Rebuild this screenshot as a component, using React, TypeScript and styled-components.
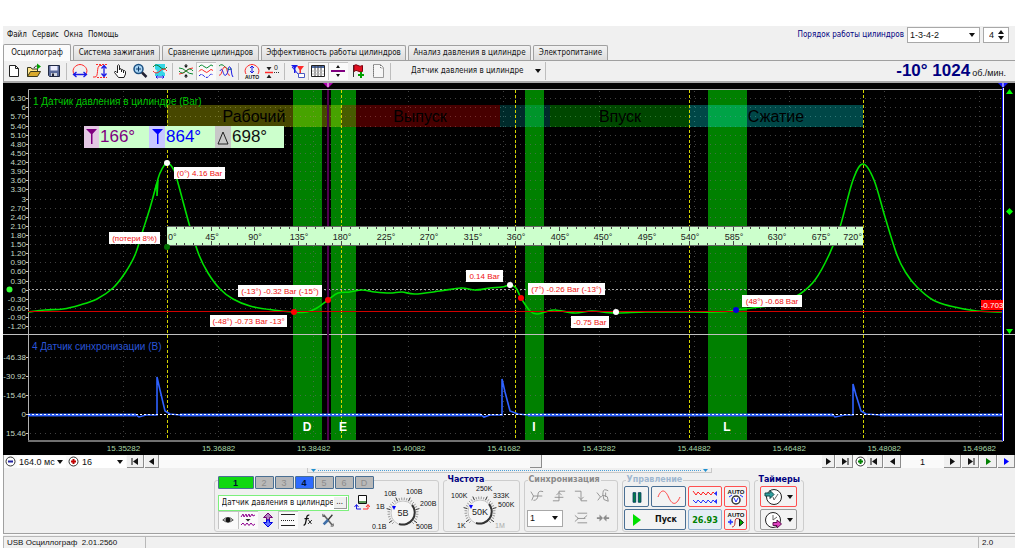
import React from "react";
import styled, { createGlobalStyle, css } from "styled-components";

const UI = `"DejaVu Sans Condensed", "Noto Sans", sans-serif`;
const SANS = `"Liberation Sans", Arial, sans-serif`;

const Global = createGlobalStyle`
  * { box-sizing: border-box; }
  body { margin: 0; background: #fff; font: 8px/12px ${UI}; color: #111; }
  button, select, input { font: inherit; color: inherit; margin: 0; padding: 0; border: 0; background: none; }
  svg { display: block; flex: none; }
`;

const Page = styled.div`
  padding: 26px 9px 3px 3px;
`;
const Window = styled.main`
  background: #f0f0f0;
`;
const Header = styled.header`
  display: flex;
  justify-content: space-between;
  height: 18px;
`;
const Menu = styled.nav`
  display: flex;
  align-items: center;
  gap: 3px;
  padding-left: 3px;
`;
const MenuItem = styled.button`
  padding: 0 1px;
`;
const Order = styled.div`
  display: flex;
  align-items: center;
  gap: 3px;
  padding-right: 6px;
  color: #000080;
`;
const Field = styled.span<{ $w: number; $h?: number }>`
  position: relative;
  display: flex;
  align-items: center;
  width: ${(p) => p.$w}px;
  height: ${(p) => p.$h ?? 16}px;
  background: #fff;
  border: 1px solid #a8a8a8;
  font-family: ${SANS};
  color: #111;
  & > svg { position: absolute; right: 4px; pointer-events: none; }
`;
const PlainSelect = styled.select`
  appearance: none;
  width: 100%;
  height: 100%;
  padding-left: 2px;
  font-size: 9px;
`;
const PlainInput = styled.input`
  width: 100%;
  min-width: 0;
  padding-left: 5px;
  font-size: 9px;
`;
const Tabs = styled.div`
  display: flex;
  align-items: flex-end;
  gap: 2px;
  height: 17px;
  border-bottom: 1px solid #a0a0a0;
`;
const Tab = styled.button<{ $w: number; $active?: boolean }>`
  width: ${(p) => p.$w}px;
  height: 15px;
  background: linear-gradient(#f2f2f2, #dcdcdc);
  border: 1px solid #a0a0a0;
  border-bottom: 0;
  border-radius: 2px 2px 0 0;
  white-space: nowrap;
  ${(p) =>
    p.$active &&
    css`
      height: 17px;
      margin-bottom: -1px;
      background: #fbfbfb;
    `}
`;
const Toolbar = styled.div`
  display: flex;
  align-items: center;
  height: 22px;
  border-left: 1px solid #a0a0a0;
  border-bottom: 2px solid #a8a8a8;
`;
const Tool = styled.button<{ $on?: boolean }>`
  display: grid;
  place-items: center;
  width: 20px;
  height: 18px;
  ${(p) => p.$on && css`background: #fafafa; box-shadow: inset 1px 1px #c4c4c4;`}
`;
const Rule = styled.span`
  width: 1px;
  height: 17px;
  margin: 0 3px 0 2px;
  background: #bdbdbd;
`;
const SensorPick = styled.button`
  display: flex;
  align-items: center;
  justify-content: space-between;
  width: 152px;
  height: 18px;
  padding: 0 4px 0 17px;
  border-right: 1px solid #bdbdbd;
`;
const Readout = styled.output`
  margin-left: auto;
  padding-right: 9px;
  font: bold 17px/18px ${SANS};
  color: #000080;
  white-space: nowrap;
`;
const Unit = styled.small`
  padding-left: 2px;
  font: 9px/12px ${SANS};
  color: #111;
`;
const Chart = styled.svg`
  width: 100%;
  height: auto;
  background: #000;
  font-family: ${SANS};
`;
const Navigator = styled.div`
  display: flex;
  align-items: center;
  gap: 1px;
  height: 13px;
  background: #fafafa;
  border-left: 1px solid #a0a0a0;
`;
const NavField = styled.span<{ $w: number }>`
  position: relative;
  display: flex;
  align-items: center;
  width: ${(p) => p.$w}px;
  height: 12px;
  background: #fff;
  font-family: ${SANS};
  & > svg { position: absolute; right: 3px; pointer-events: none; }
`;
const NavButton = styled.button<{ $w: number }>`
  display: grid;
  place-items: center;
  width: ${(p) => p.$w}px;
  height: 13px;
  background: #f0f0f0;
  border-right: 1px solid #8c8c8c;
  border-bottom: 1px solid #8c8c8c;
`;
const RoundButton = styled.button`
  display: grid;
  place-items: center;
  width: 12px;
  height: 13px;
`;
const Track = styled.div`
  display: flex;
  flex: 1;
  justify-content: center;
  height: 13px;
  padding-left: 90px;
`;
const Thumb = styled.span`
  width: 12px;
  background: #f0f0f0;
  border-right: 1px solid #8c8c8c;
  border-bottom: 1px solid #8c8c8c;
`;
const PageNumber = styled.span`
  width: 41px;
  text-align: center;
  font: 9px/12px ${SANS};
`;
const Deck = styled.section`
  height: 66px;
  border-left: 1px solid #a0a0a0;
  border-bottom: 1px solid #a0a0a0;
`;
const Splitter = styled.div`
  display: flex;
  align-items: center;
  justify-content: space-between;
  width: 40%;
  height: 5px;
  margin: 0 auto 3px;
  border: 1px solid #c8c8c8;
  border-top: 0;
  padding: 0 3px;
`;
const Dots = styled.span`
  flex: 1;
  margin: 0 2px;
  border-top: 1px dotted #4aa0d8;
`;
const Panels = styled.div`
  display: flex;
  justify-content: center;
  gap: 4px;
  height: 56px;
  padding-right: 2px;
`;
const Group = styled.fieldset<{ $w: number; $tone?: string }>`
  width: ${(p) => p.$w}px;
  min-width: 0;
  margin: 0;
  padding: 0;
  border: 1px solid #cdcdcd;
  border-radius: 3px;
  & > legend {
    height: 8px;
    margin-left: 3px;
    padding: 0 1px;
    font: bold 8px/8px "DejaVu Sans", sans-serif;
    color: ${(p) => p.$tone ?? "#000080"};
    white-space: nowrap;
  }
`;
const ChannelGroup = styled(Group)`
  display: flex;
  margin-top: 4px;
  height: 52px;
`;
const ChannelSide = styled.div`
  flex: none;
  width: 157px;
  padding-left: 3px;
`;
const ChannelRow = styled.div`
  display: flex;
  gap: 1px;
  width: 156px;
  margin-top: -5px;
  background: #f0f0f0;
`;
const Channel = styled.button<{ $w?: number; $bg?: string }>`
  flex: none;
  width: ${(p) => p.$w ?? 19}px;
  height: 13px;
  background: ${(p) => p.$bg ?? "#b9b9b9"};
  border: 1px solid #4a6f93;
  border-radius: 1px;
  font: ${(p) => (p.$bg ? "bold" : "normal")} 9px/10px ${SANS};
  color: ${(p) => (p.$bg ? "#001030" : "#8c8c8c")};
`;
const SensorRow = styled.div`
  display: flex;
  align-items: center;
  gap: 3px;
  height: 17px;
  margin-top: 5px;
`;
const SensorField = styled.span`
  display: flex;
  width: 132px;
  height: 16px;
  background: #fff;
  border: 1px solid #7df07d;
`;
const SensorInput = styled.input`
  flex: 1;
  min-width: 0;
  padding-left: 3px;
`;
const More = styled.button`
  width: 13px;
  height: 12px;
  margin: 1px;
  background: #f0f0f0;
  border-right: 1px solid #999;
  border-bottom: 1px solid #999;
  line-height: 8px;
`;
const ModeRow = styled.div`
  display: flex;
`;
const KnobBox = styled.div`
  position: relative;
`;
const KnobRange = styled.input`
  position: absolute;
  inset: 12px 16px;
  width: 36px;
  height: 28px;
  opacity: 0;
`;
const SyncGrid = styled.div`
  display: grid;
  grid-template-columns: repeat(4, 21px);
  grid-auto-rows: 20px;
  align-items: center;
  justify-content: center;
  gap: 2px 1px;
  padding-top: 2px;
`;
const SyncSelect = styled.span`
  grid-column: span 2;
  color: #666;
`;
const ControlGrid = styled.div`
  display: grid;
  grid-template-columns: 25px 35px 34px 23px;
  grid-auto-rows: 21px;
  justify-content: center;
  gap: 2px;
  padding-top: 2px;
`;
const PanelButton = styled.button<{ $edge?: string; $span?: number; $tint?: string }>`
  display: flex;
  align-items: center;
  justify-content: center;
  gap: 14px;
  grid-column: span ${(p) => p.$span ?? 1};
  background: ${(p) => p.$tint ?? "#f3f3f3"};
  border: 1px solid ${(p) => p.$edge ?? "#4a6f93"};
  border-radius: 2px;
  font: bold 8px/12px "DejaVu Sans", sans-serif;
`;
const Speed = styled.output`
  display: grid;
  place-items: center;
  background: #e4edf5;
  border: 1px solid #8fb0d0;
  border-radius: 2px;
  font: bold 9px/12px "DejaVu Sans Condensed", sans-serif;
  color: #008000;
`;
const TimerStack = styled.div`
  display: grid;
  grid-auto-rows: 21px;
  gap: 2px;
  padding: 2px 6px 0 5px;
`;
const TimerButton = styled(PanelButton)`
  gap: 4px;
`;
const Status = styled.footer`
  display: flex;
  align-items: center;
  height: 14px;
  border-top: 1px solid #fafafa;
  font-family: ${SANS};
`;
const StatusCell = styled.span<{ $w?: number }>`
  flex: ${(p) => (p.$w ? "none" : 1)};
  width: ${(p) => (p.$w ? p.$w + "px" : "auto")};
  height: 12px;
  padding-left: 3px;
  border-left: 1px solid #b8b8b8;
  border-top: 1px solid #b8b8b8;
`;

/* ---------- icons ---------- */
const Ico = ({ children, s = 16 }: { children: React.ReactNode; s?: number }) => (
  <svg width={s} height={s} viewBox="0 0 16 16" fill="none" strokeWidth="1" aria-hidden="true">
    {children}
  </svg>
);
const Caret = () => (
  <svg width="6" height="4" viewBox="0 0 6 4" aria-hidden="true">
    <path d="M0 0H6L3 4Z" fill="#111" />
  </svg>
);
const RED = "#ff2a2a";
const BLUE = "#1a1ae6";
const MUTED = "#8c8c8c";

const icons: Record<string, React.ReactNode> = {
  new: <path d="M3.5 2.5H9.500L12.500 5.500V13.500H3.500ZM9.500 2.500V5.500H12.500" fill="#fff" stroke="#222" />,
  open: (
    <>
      <path d="M1.500 13.500V4.500H5L6 6H11.500V8" fill="#ffe58a" stroke="#3a3a20" />
      <path d="M1.500 13.500L4.500 8.500H14.500L11.500 13.500Z" fill="#d9a92c" stroke="#3a3a20" />
      <path d="M8 5C9 3 10 3 12 3" stroke="#222" />
      <path d="M11 0.500L15 3.500L11 6.500Z" fill="#00a000" />
    </>
  ),
  save: (
    <>
      <path d="M2.500 2.500H13.500V13.500H3.500L2.500 12.500Z" fill="#5a6a9a" stroke="#222a44" />
      <path d="M4.500 3H11.500V7.500H4.500Z" fill="#eef" />
      <path d="M5 10H11V13H5Z" fill="#cfd4dd" />
      <path d="M6 10.500H8V13H6Z" fill="#223" />
    </>
  ),
  width: (
    <>
      <path d="M2 11C-1 6 4 1.500 8 1.500S17 6 14 11" stroke={RED} />
      <path d="M2 11.500H14M4.500 9L1.500 11.500L4.500 14M11.500 9L14.500 11.500L11.500 14" stroke={BLUE} strokeWidth="1.300" />
    </>
  ),
  height: (
    <>
      <path d="M1 14H3C7 14 4 3 8 2.500H10" stroke={RED} />
      <path d="M4 1.500H15M5 14.500H15" stroke={RED} strokeDasharray="2 1" />
      <path d="M12 3V13M9.500 5.500L12 2.500L14.500 5.500M9.500 10.500L12 13.500L14.500 10.500" stroke={BLUE} strokeWidth="1.300" />
    </>
  ),
  hand: <path d="M5.500 10V2.500Q6.500 1 7.500 2.500V7L8 6Q9 5 9.500 6.500V7Q10.500 6 11.300 7V8Q13 7 13.500 8.500V11L12 14.500H6.500L2.500 9.500Q2.500 8 4 8.500L5.500 10M9.500 7V9M11.500 8V10" fill="#fff" stroke="#222" />,
  zoom: (
    <>
      <circle cx="6.500" cy="6" r="4.500" fill="#a8d4f4" stroke="#1c4f80" strokeWidth="1.500" />
      <path d="M4 6H9M6.500 3.500V8.500" stroke="#0b3a6b" />
      <path d="M10 9.500L14.500 14" stroke="#223" strokeWidth="2.500" />
    </>
  ),
  zones: (
    <>
      <path d="M3 1H13V6L10.500 8L13 10V13H3V10L5.500 8L3 6Z" fill="#33d6e6" />
      <path d="M1 4Q4 0 8 4T15 4" stroke="#0a7a30" />
      <path d="M1 8Q4 12 8 8T15 8" stroke={RED} />
      <path d="M4 14H12M5.500 12.500L4 14L5.500 15.500M10.500 12.500L12 14L10.500 15.500" stroke={BLUE} />
    </>
  ),
  squeeze: (
    <>
      <path d="M8 1V3M8 15V13" stroke="#111" />
      <path d="M6 2.500H10L8 5ZM6 13.500H10L8 11Z" fill="#111" />
      <path d="M1 5Q5 5 8 8T15 11" stroke="#0a8a30" />
      <path d="M1 11Q5 11 8 8T15 5" stroke={RED} />
      <path d="M1 8Q4 12 8 8T15 8" stroke="#0a8a30" />
    </>
  ),
  waves: (
    <>
      <path d="M1 4Q3 .500 6 3.500T11 3.500T15 3" stroke="#0a8a30" />
      <path d="M1 8.500Q3 5 6 8T11 8T15 7.500" stroke={RED} />
      <path d="M1 13Q3 10 6 13T11 13T15 12" stroke={BLUE} strokeDasharray="3 1" />
    </>
  ),
  overlay: (
    <>
      <path d="M1 3Q4 0 7 4T14 6" stroke="#0a8a30" />
      <path d="M1 12C4 14 4 3 7 4S9 14 12 12" stroke={RED} />
      <path d="M2 8C5 2 5 15 8 12S10 2 12 4S13 12 15 14" stroke={BLUE} />
    </>
  ),
  autoscale: (
    <>
      <path d="M2 11C-1 6 4 1.500 8 1.500S17 6 14 11" stroke={RED} />
      <path d="M8 3V10M6 5L8 3L10 5M6 8L8 10L10 8" stroke={BLUE} />
      <text x="8" y="15.500" fontSize="5" fontWeight="bold" textAnchor="middle" fill="#111" fontFamily={SANS}>AUTO</text>
    </>
  ),
  zero: (
    <>
      <path d="M1 9.500H9" stroke={RED} strokeWidth="1.500" />
      <path d="M2.500 4H7.500L5 7.500ZM2.500 15H7.500L5 11.500Z" fill="#222" />
      <path d="M10 9.500H15" stroke="#333" strokeDasharray="1 1" />
      <text x="12" y="7" fontSize="7" textAnchor="middle" fill="#222" fontFamily={SANS}>0</text>
    </>
  ),
  markers: (
    <>
      <path d="M1 2H8L5.500 5V10H4V5Z" fill={BLUE} />
      <path d="M7 3H14L11 7V11H9.500V7Z" fill={RED} />
      <path d="M2 4L9 12" stroke={BLUE} />
      <path d="M8.500 10.500H14.500V14.500H8.500Z" fill="#fff" stroke="#4a5ac0" />
    </>
  ),
  table: (
    <>
      <path d="M1.500 2.500H14.500V13.500H1.500Z" fill="#fff" stroke="#222" />
      <path d="M2 3H14V5H2Z" fill="#4a6aa8" />
      <path d="M5 3V13M8 3V13M11 3V13" stroke="#444" />
      <path d="M2 8H14M2 11H14" stroke="#bbb" />
    </>
  ),
  divide: (
    <>
      <path d="M1 8H15" stroke="#800080" strokeWidth="2" />
      <path d="M6 5H10L8 2ZM6 11H10L8 14Z" fill="#111" />
    </>
  ),
  flag: (
    <>
      <path d="M3.500 2V14" stroke="#333" />
      <path d="M4 2.500Q6 1 8 2.500T12.500 2.500V8.500Q10 9.500 8 8T4 8.500Z" fill="#e01020" stroke="#800010" />
      <path d="M11 9V15M8 12H14" stroke="#00a000" strokeWidth="2" />
    </>
  ),
  sheet: (
    <>
      <path d="M3.500 1.500H10.500L13.500 4.500V14.500H3.500Z" fill="#f6f6f6" stroke="#9a9a9a" />
      <path d="M3.500 2V14M10.500 2V5H13" stroke="#777" strokeDasharray="1 1" />
    </>
  ),
  eye: (
    <>
      <path d="M2 8Q8 2 14 8Q8 13 2 8Z" fill="#bbb" stroke="#444" />
      <circle cx="8" cy="8" r="2.800" fill="#111" />
    </>
  ),
  noise: (
    <>
      <path d="M1 5L3 2L4 5L6 2L7 5L9 2L10 5L12 2L13 4L15 3" stroke="#900090" />
      <path d="M5.500 7H10.500L8 9.500Z" fill="#222" />
      <path d="M1 13L3 11L5 13.500L7 11L9 13.500L11 11L13 13.500L15 12" stroke="#900090" />
    </>
  ),
  updown: (
    <>
      <path d="M8 1L12.500 5.500H9.500V8H6.500V5.500H3.500Z" fill="#b080c0" stroke="#700070" />
      <path d="M8 15L12.500 10.500H9.500V8H6.500V10.500H3.500Z" fill="#6070ff" stroke="#0000e0" />
    </>
  ),
  lines: (
    <>
      <path d="M1 2.500H15M1 13.500H15" stroke="#222" />
      <path d="M1 8.500H15" stroke="#222" strokeDasharray="1 1" />
    </>
  ),
  fx: (
    <>
      <path d="M3 14Q5 14 5.500 10L6.500 5Q7 2 9.500 2.500M4 6.500H9" stroke="#111" strokeWidth="1.500" />
      <path d="M8.500 8L12 12.500M12.500 8L8 12.500" stroke="#111" />
    </>
  ),
  tools: (
    <>
      <path d="M3 2L13 14" stroke="#666" strokeWidth="2" />
      <path d="M13 2L8 8" stroke="#333" strokeWidth="1.500" />
      <path d="M8 8L3 13" stroke="#3f6fa8" strokeWidth="3" />
      <path d="M2 1V4H5M11 15H14V12" stroke="#555" />
    </>
  ),
  rotate: (
    <>
      <path d="M4.500 .500H12.500V8.500H4.500Z" fill="#fff" stroke="#111" />
      <path d="M5 6H12V8H5Z" fill="#5a9a5a" />
      <path d="M7 14H2.500V10M0.500 12L2.500 9.500L4.500 12" stroke={BLUE} />
      <path d="M9 14H14V10M12 12L14 9.500L16 12" stroke={RED} />
    </>
  ),
  trigSlope: <path d="M1 3L4 8L2 13M4 13Q9 13 9 7T15 3M4 8H14" stroke={MUTED} />,
  trigRise: <path d="M1 13.500H8V2.500H15M5 7L8 4L11 7M3 9.500H13" stroke={MUTED} />,
  trigFall: <path d="M1 2.500H8V13.500H15M5 9L8 12L11 9" stroke={MUTED} />,
  trigTouch: <path d="M1 4L5 9L2 13M5 9Q8 9 8 4T14 2M8 7L13 9L14 14L9 12ZM11 4V9" fill="none" stroke={MUTED} />,
  levels: <path d="M4 2.500H15M4 8.500H13M4 13.500H15M1 5L5 8.500L1 12M15 5L11 8.500" stroke={MUTED} />,
  meet: (
    <>
      <path d="M1 8H5M11 8H15" stroke={MUTED} strokeWidth="2" />
      <path d="M4 4L8 8L4 12ZM12 4L8 8L12 12Z" fill={MUTED} />
    </>
  ),
};

const toolGroups: { id: string; label: string; on?: boolean }[][] = [
  [{ id: "new", label: "Новый" }, { id: "open", label: "Открыть" }, { id: "save", label: "Сохранить" }],
  [
    { id: "width", label: "Ширина" },
    { id: "height", label: "Высота" },
    { id: "hand", label: "Рука" },
    { id: "zoom", label: "Лупа" },
    { id: "zones", label: "Зоны" },
  ],
  [{ id: "squeeze", label: "Сжать" }, { id: "waves", label: "Каналы", on: true }, { id: "overlay", label: "Наложение" }],
  [{ id: "autoscale", label: "Авто" }, { id: "zero", label: "Ноль" }],
  [
    { id: "markers", label: "Маркеры" },
    { id: "table", label: "Таблица", on: true },
    { id: "divide", label: "Линейка", on: true },
    { id: "flag", label: "Метка" },
    { id: "sheet", label: "Отчёт" },
  ],
];

const tabs: [string, number][] = [
  ["Осциллограф", 68],
  ["Система зажигания", 87],
  ["Сравнение цилиндров", 97],
  ["Эффективность работы цилиндров", 145],
  ["Анализ давления в цилиндре", 123],
  ["Электропитание", 75],
];

/* ---------- chart ---------- */
type Pt = [number, number];

const spline = (p: Pt[]) => {
  let d = `M${p[0][0]} ${p[0][1]}`;
  for (let i = 0; i < p.length - 1; i++) {
    const a = p[i - 1] ?? p[i];
    const b = p[i];
    const c = p[i + 1];
    const e = p[i + 2] ?? c;
    d += `C${b[0] + (c[0] - a[0]) / 6} ${b[1] + (c[1] - a[1]) / 6} ${c[0] - (e[0] - b[0]) / 6} ${c[1] - (e[1] - b[1]) / 6} ${c[0]} ${c[1]}`;
  }
  return d;
};

const pressure: Pt[] = [
  [28, 312], [45, 310], [63, 309], [80, 305], [97, 299], [113, 288], [125, 273], [135, 255], [143, 230], [150, 208],
  [155, 190], [160, 173], [167, 163], [174, 170], [178, 183], [190, 227], [199, 255], [208, 273], [220, 289], [233, 299],
  [250, 306], [273, 310], [294, 312], [307, 312], [317, 308], [328, 300], [338, 293], [350, 292], [362, 290], [375, 292],
  [390, 293], [402, 292], [415, 294], [440, 291], [461, 288], [475, 290], [490, 288], [502, 287], [510, 285], [516, 288],
  [521, 298], [530, 311], [537, 314], [545, 312], [555, 310], [575, 313], [592, 311], [615, 313], [645, 312], [680, 312],
  [720, 312], [736, 310], [767, 306], [785, 301], [800, 294], [815, 280], [829, 255], [840, 227], [853, 180], [863, 164],
  [874, 180], [885, 217], [897, 255], [906, 273], [917, 287], [933, 300], [950, 306], [977, 311], [1002, 312],
];
const syncLine =
  "M28 415H136L139 417L146 415H157V377L160 390L165 411L170 414L180 415H481L484 417L490 415H502V379L505 392L510 411L518 414L528 415H833L835 417L845 415H853V384L856 395L861 411L866 414L880 415H1002";

/* Whole numbers are written without decimals; the step is 0.3 Bar. */
const yTicks = Array.from({ length: 26 }, (_, i) => {
  const tenths = 63 - i * 3;
  return { y: 98.2 + i * 9.12, text: tenths % 10 === 0 ? String(tenths / 10) : (tenths / 10).toFixed(2) };
});
const syncTicks = [["-46.38", 357], ["-30.92", 376], ["-15.46", 395], ["0", 414], ["15.46", 433]] as [string, number][];
const xTicks = Array.from({ length: 10 }, (_, i) => ({ x: 123.5 + i * 95.1, text: (15.35282 + i * 0.016).toFixed(5) }));
const deg = (d: number) => 167 + (d * 696.5) / 720;

const bands = [[293, 29, "D", 307], [331, 25, "E", 343], [525, 19, "I", 534], [708, 39, "L", 727]] as [number, number, string, number][];
const strokes = [
  [167, 174, "#ff0", 0.28, "Рабочий", 254],
  [341, 159, "#f00", 0.28, "Выпуск", 420],
  [500, 50, "#0ff", 0.17, "", 0],
  [550, 139, "#0f0", 0.28, "Впуск", 620],
  [689, 174, "#0ff", 0.28, "Сжатие", 776],
] as [number, number, string, number, string, number][];
const notes = [
  [174, 167, 51, "(0°) 4.16 Bar"],
  [109, 232, 51, "(потери 8%)"],
  [238, 285, 84, "(-13°) -0.32 Bar (-15°)"],
  [210, 315, 77, "(-48°) -0.73 Bar -13°"],
  [466, 270, 37, "0.14 Bar"],
  [528, 283, 77, "(7°) -0.26 Bar (-13°)"],
  [571, 316, 38, "-0.75 Bar"],
  [742, 295, 60, "(48°) -0.68 Bar"],
] as [number, number, number, string][];
const dots = [
  [167, 163, "#fff"], [167, 247, "#007000"], [294, 312, "#f00"], [328, 300, "#f00"], [510, 285, "#fff"],
  [521, 298, "#f00"], [616, 312, "#fff"], [736, 310, "#00d"],
] as [number, number, string][];

const Scope = () => (
  <Chart viewBox="3 83 1012 372" role="img" aria-label="Осциллограмма">
    {bands.map(([x, w]) => (
      <rect key={x} x={x} y="90" width={w} height="350" fill="#008000" />
    ))}
    <g stroke="#6a6a6a" strokeOpacity="0.6" strokeDasharray="1 4">
      {yTicks.map((t) => <path key={t.y} d={`M30 ${Math.round(t.y)}.5H1002`} />)}
      {syncTicks.map(([, y]) => <path key={y} d={`M30 ${y}.5H1002`} />)}
      {xTicks.map((t) => <path key={t.x} d={`M${Math.floor(t.x)}.5 91V440`} />)}
    </g>
    <path d="M28 289.500H1002" stroke="#aaa" strokeWidth="1" strokeDasharray="2 2" />
    <g fontSize="8" fill="#c4d8c4" textAnchor="end">
      {yTicks.map((t) => <text key={t.y} x="26" y={Math.round(t.y) + 3}>{t.text}</text>)}
      {syncTicks.map(([s, y]) => <text key={y} x="26" y={y + 3}>{s}</text>)}
    </g>
    <g stroke="#c8c8c8">
      {yTicks.map((t) => <path key={t.y} d={`M26 ${Math.round(t.y)}.5H29`} />)}
      {syncTicks.map(([, y]) => <path key={y} d={`M26 ${y}.5H29`} />)}
    </g>
    <g fontSize="8" fill="#a8d8a8" textAnchor="middle">
      {xTicks.map((t) => <text key={t.x} x={t.x} y="451">{t.text}</text>)}
    </g>
    <path d="M28.500 441V89.500H1003" fill="none" stroke="#b0b0b0" />
    <path d="M3 334.500H1015" stroke="#c0c0c0" />
    <path d="M28 441H1003" stroke="#707070" strokeWidth="2" />
    {strokes.map(([x, w, c, o, s, tx]) => (
      <g key={x}>
        <rect x={x} y="105" width={w} height="22" fill={c} fillOpacity={o} />
        {s && <text x={tx} y="122" fontSize="16" textAnchor="middle" fill="#000">{s}</text>}
      </g>
    ))}
    <g stroke="#d4d400" strokeDasharray="3 2">
      {[167, 341, 515, 689, 863].map((x) => <path key={x} d={`M${x}.5 90V440`} />)}
    </g>
    <path d="M328 90V440" stroke="#500050" strokeWidth="2" />
    <path d="M323 83H333L328 88Z" fill="#b000b0" />
    <path d="M328 83V87" stroke="#fff" />
    <text x="33" y="105" fontSize="10" fill="#00c800">1 Датчик давления в цилиндре (Bar)</text>
    <text x="32" y="350" fontSize="10" fill="#2a55d8">4 Датчик синхронизации (В)</text>
    <path d={spline(pressure)} fill="none" stroke="#00e000" strokeWidth="1.600" />
    <path d="M155 190L157 183V196L158 180" fill="none" stroke="#00e000" strokeWidth="1.600" />
    <path d="M28 311.500H1002" stroke="#d00000" />
    <path d="M28 415H136M180 415H481M528 415H833M880 415H1002" stroke="#2a5cf0" strokeWidth="3" />
    <path d={syncLine} fill="none" stroke="#2f62ff" strokeWidth="1.600" />
    <path d="M28 414.500H1002" stroke="#fff" strokeWidth="1" strokeDasharray="2 2" />
    {bands.map(([x, , s, tx]) => (
      <text key={x} x={tx} y="431" fontSize="12" fontWeight="bold" textAnchor="middle" fill="#fff">{s}</text>
    ))}
    <path d="M1003.500 88V441" stroke="#fff" />
    <path d="M1002.500 88V441" stroke="#1010ff" />
    <path d="M998 83H1008L1003 88Z" fill="#1515ff" />
    <path d="M1003 83V87" stroke="#fff" />
    <path d="M1006 94H1013L1009.500 89ZM1006 329H1013L1009.500 334ZM1009.500 208L1013 211.500L1009.500 215L1006 211.500Z" fill="#0f0" />
    <circle cx="9.500" cy="289.500" r="3" fill="#3f3" />

    <rect x="84" y="126" width="200" height="22" fill="#cfc" />
    <rect x="84" y="126" width="15" height="22" fill="#e4c8e4" />
    <rect x="149" y="126" width="16" height="22" fill="#c8c8ff" />
    <rect x="215" y="126" width="16" height="22" fill="#c8c8c8" />
    <path d="M86 129H97L92.500 134V144H91V134Z" fill="#800080" />
    <path d="M152 129H163L158.500 134V144H157V134Z" fill="#00f" />
    <path d="M223 132L228 144H218Z" fill="none" stroke="#222" />
    <g fontSize="17">
      <text x="100" y="142" fill="#800080">166°</text>
      <text x="166" y="142" fill="#00f">864°</text>
      <text x="232" y="142" fill="#111">698°</text>
    </g>

    <rect x="167" y="227" width="696" height="18" fill="#cfc" />
    <path d="M167 226.500H863M167 245.500H863" stroke="#666" />
    <g stroke="#444">
      {Array.from({ length: 79 }, (_, i) => (i + 1) * 9).map((d) => {
        const h = d % 45 === 0 ? 4 : 2;
        const x = Math.round(deg(d)) + 0.5;
        return <path key={d} d={`M${x} 227V${227 + h}M${x} 245V${245 - h}`} />;
      })}
    </g>
    <g fontSize="9" fill="#222">
      {Array.from({ length: 17 }, (_, i) => i * 45).map((d) => (
        <text
          key={d}
          x={d === 0 ? 168 : d === 720 ? 862 : Math.round(deg(d)) + 1}
          y="240"
          textAnchor={d === 0 ? "start" : d === 720 ? "end" : "middle"}
        >
          {d}°
        </text>
      ))}
    </g>

    {dots.map(([x, y, c]) => <circle key={`${x}-${y}`} cx={x} cy={y} r="3" fill={c} />)}
    {notes.map(([x, y, w, s]) => (
      <g key={s}>
        <rect x={x} y={y} width={w} height="12" fill="#fff" />
        <text x={x + w / 2} y={y + 9} fontSize="8" textAnchor="middle" fill="#f01010">{s}</text>
      </g>
    ))}
    <rect x="981" y="300" width="22" height="10" fill="#f00" />
    <text x="992" y="308" fontSize="8" textAnchor="middle" fill="#fff">-0.703</text>
  </Chart>
);

/* ---------- small widgets ---------- */
const Arrow = ({ back, bar, c = "#111" }: { back?: boolean; bar?: boolean; c?: string }) => (
  <svg width="9" height="7" viewBox="0 0 9 7" aria-hidden="true">
    <path d={back ? "M7 0V7L2 3.500Z" : "M2 0V7L7 3.500Z"} fill={c} />
    {bar && <path d={back ? "M1 0V7" : "M8 0V7"} stroke={c} strokeWidth="1" />}
  </svg>
);
const Round = ({ plus, c }: { plus?: boolean; c: string }) => (
  <svg width="11" height="11" viewBox="0 0 11 11" fill="none" aria-hidden="true">
    <circle cx="5.500" cy="5.500" r="4.500" fill="#fff" stroke="#333" />
    <path d={plus ? "M3 5.500H8M5.500 3V8" : "M3 5.500H8"} stroke={c} strokeWidth="2" />
  </svg>
);

type KnobLabel = [string, number, number, string?];
type KnobProps = { label: string; value: string; w: number; h: number; cx: number; cy: number; marks: KnobLabel[] };
const Knob = ({ label, value, w, h, cx, cy, marks }: KnobProps) => (
  <KnobBox>
    <svg width={w} height={h} viewBox={`0 0 ${w} ${h}`} fontFamily={SANS} fontSize="7" aria-hidden="true">
      {Array.from({ length: 28 }, (_, i) => {
        const a = ((135 + i * 10) * Math.PI) / 180;
        const r = i % 5 === 1 ? 17 : 15.5;
        return (
          <path
            key={i}
            d={`M${cx + 13 * Math.cos(a)} ${cy + 13 * Math.sin(a)}L${cx + r * Math.cos(a)} ${cy + r * Math.sin(a)}`}
            stroke={i % 5 === 1 ? "#333" : "#999"}
          />
        );
      })}
      <circle cx={cx} cy={cy} r="12" fill="#f6f6f6" stroke="#c4c4c4" />
      <path d={`M${cx + 9} ${cy - 8}A12 12 0 0 1 ${cx - 4} ${cy + 11}`} fill="none" stroke="#333" strokeWidth="2" />
      <path d={`M${cx - 11} ${cy - 7}H${cx - 7}L${cx - 9} ${cy - 3}Z`} fill="#00f" />
      <text x={cx} y={cy + 3} textAnchor="middle" fontSize="9" fill="#222">{value}</text>
      {marks.map(([s, x, y, c]) => (
        <text key={s} x={x} y={y} fill={c ?? "#111"}>{s}</text>
      ))}
    </svg>
    <KnobRange type="range" aria-label={label} />
  </KnobBox>
);

export default function App() {
  return (
    <Page>
      <Global />
      <Window>
        <Header>
          <Menu>
            {["Файл", "Сервис", "Окна", "Помощь"].map((m) => <MenuItem key={m}>{m}</MenuItem>)}
          </Menu>
          <Order>
            <label htmlFor="order">Порядок работы цилиндров</label>
            <Field $w={73}>
              <PlainSelect id="order"><option>1-3-4-2</option></PlainSelect>
              <Caret />
            </Field>
            <Field $w={26}>
              <PlainInput aria-label="Число цилиндров" defaultValue="4" />
              <svg width="6" height="10" viewBox="0 0 6 10" aria-hidden="true">
                <path d="M0 4H6L3 0ZM0 6H6L3 10Z" fill="#111" />
              </svg>
            </Field>
          </Order>
        </Header>

        <Tabs role="tablist">
          {tabs.map(([t, w], i) => (
            <Tab key={t} role="tab" aria-selected={i === 0} $w={w} $active={i === 0}>{t}</Tab>
          ))}
        </Tabs>

        <Toolbar>
          {toolGroups.map((g, i) => (
            <React.Fragment key={i}>
              {g.map((t) => (
                <Tool key={t.id} aria-label={t.label} $on={t.on}><Ico>{icons[t.id]}</Ico></Tool>
              ))}
              <Rule />
            </React.Fragment>
          ))}
          <SensorPick>Датчик давления в цилиндре <Caret /></SensorPick>
          <Readout>-10° 1024<Unit>об./мин.</Unit></Readout>
        </Toolbar>

        <Scope />

        <Navigator>
          <RoundButton aria-label="Уменьшить"><Round c="#2020a0" /></RoundButton>
          <NavField $w={49}>
            <PlainSelect aria-label="Развёртка"><option>164.0 мс</option></PlainSelect>
            <Caret />
          </NavField>
          <RoundButton aria-label="Увеличить"><Round plus c="#c00000" /></RoundButton>
          <NavField $w={46}>
            <PlainSelect aria-label="Масштаб"><option>16</option></PlainSelect>
            <Caret />
          </NavField>
          <NavButton $w={17} aria-label="В начало"><Arrow back bar /></NavButton>
          <NavButton $w={14} aria-label="Назад"><Arrow back /></NavButton>
          <Track><Thumb /></Track>
          <NavButton $w={13} aria-label="Вперёд"><Arrow /></NavButton>
          <NavButton $w={17} aria-label="В конец"><Arrow bar /></NavButton>
          <RoundButton aria-label="Добавить"><Round plus c="#008000" /></RoundButton>
          <NavButton $w={16} aria-label="Первая страница"><Arrow back bar /></NavButton>
          <NavButton $w={17} aria-label="Предыдущая страница"><Arrow back /></NavButton>
          <PageNumber>1</PageNumber>
          <NavButton $w={17} aria-label="Следующая страница"><Arrow /></NavButton>
          <NavButton $w={17} aria-label="Последняя страница"><Arrow bar /></NavButton>
          <NavButton $w={17} aria-label="Воспроизвести"><Arrow c="#008000" /></NavButton>
          <NavButton $w={17} aria-label="Следить"><Arrow c="#0000ff" /></NavButton>
        </Navigator>

        <Deck>
          <Splitter>
            <svg width="5" height="3" viewBox="0 0 5 3" aria-hidden="true"><path d="M0 0H5L2.500 3Z" fill="#2090d0" /></svg>
            <Dots />
            <svg width="5" height="3" viewBox="0 0 5 3" aria-hidden="true"><path d="M0 0H5L2.500 3Z" fill="#2090d0" /></svg>
          </Splitter>
          <Panels>
            <ChannelGroup $w={225} aria-label="Каналы">
              <ChannelSide>
                <ChannelRow>
                  <Channel $w={36} $bg="#10d810">1</Channel>
                  <Channel>2</Channel>
                  <Channel>3</Channel>
                  <Channel $bg="#2f6bff">4</Channel>
                  <Channel>5</Channel>
                  <Channel>6</Channel>
                  <Channel>D</Channel>
                </ChannelRow>
                <SensorRow>
                  <SensorField>
                    <SensorInput aria-label="Датчик" defaultValue="Датчик давления в цилиндре" />
                    <More aria-label="Выбрать">...</More>
                  </SensorField>
                  <Tool aria-label="Инвертировать"><Ico>{icons.rotate}</Ico></Tool>
                </SensorRow>
                <ModeRow>
                  <Tool $on aria-label="Показать"><Ico s={14}>{icons.eye}</Ico></Tool>
                  <Tool $on aria-label="Фильтр"><Ico>{icons.noise}</Ico></Tool>
                  <Tool aria-label="Сдвиг"><Ico>{icons.updown}</Ico></Tool>
                  <Tool $on aria-label="Линии"><Ico>{icons.lines}</Ico></Tool>
                  <Tool aria-label="Функция"><Ico s={14}>{icons.fx}</Ico></Tool>
                  <Tool aria-label="Настройка"><Ico s={14}>{icons.tools}</Ico></Tool>
                </ModeRow>
              </ChannelSide>
              <Knob
                label="Чувствительность"
                value="5В"
                w={66}
                h={50}
                cx={31}
                cy={32}
                marks={[["0.1В", 0, 48], ["1В", 4, 28], ["10В", 12, 15], ["100В", 34, 13], ["200В", 48, 25], ["500В", 44, 48]]}
              />
            </ChannelGroup>

            <Group $w={77}>
              <legend>Частота</legend>
              <Knob
                label="Частота"
                value="50K"
                w={75}
                h={46}
                cx={36}
                cy={28}
                marks={[["1K", 13, 44], ["100K", 7, 14], ["250K", 32, 7], ["333K", 49, 14], ["500K", 54, 23], ["1M", 51, 44, "#aaa"]]}
              />
            </Group>

            <Group $w={94} $tone="#8a8a8a">
              <legend>Синхронизация</legend>
              <SyncGrid>
                <Tool aria-label="Склон"><Ico s={14}>{icons.trigSlope}</Ico></Tool>
                <Tool aria-label="Фронт"><Ico s={14}>{icons.trigRise}</Ico></Tool>
                <Tool aria-label="Спад"><Ico s={14}>{icons.trigFall}</Ico></Tool>
                <Tool aria-label="Вручную"><Ico s={14}>{icons.trigTouch}</Ico></Tool>
                <SyncSelect>
                  <Field $w={36} $h={17}>
                    <PlainSelect aria-label="Канал синхронизации"><option>1</option></PlainSelect>
                    <Caret />
                  </Field>
                </SyncSelect>
                <Tool aria-label="Уровни"><Ico s={14}>{icons.levels}</Ico></Tool>
                <Tool aria-label="Свести"><Ico s={14}>{icons.meet}</Ico></Tool>
              </SyncGrid>
            </Group>

            <Group $w={128} $tone="#a0b8d0">
              <legend>Управление</legend>
              <ControlGrid>
                <PanelButton aria-label="Пауза">
                  <Ico s={14}><path d="M3.500 3H6.500V14H3.500ZM9.500 3H12.500V14H9.500Z" fill="#008040" stroke="#003a60" /></Ico>
                </PanelButton>
                <PanelButton aria-label="Синус">
                  <svg width="24" height="16" viewBox="0 0 24 16" fill="none" aria-hidden="true">
                    <path d="M1 8C4 0 8 0 11.500 8S19 17 23 8" stroke="#ff4040" />
                  </svg>
                </PanelButton>
                <PanelButton $edge="#ff5050" aria-label="Каналы записи">
                  <svg width="26" height="16" viewBox="0 0 26 16" fill="none" aria-hidden="true">
                    <path d="M1 2L4 6L6 3L9 6L11 3L14 6L16 3L19 6L21 3L23 5" stroke="#ff2020" />
                    <path d="M1 11L4 14L6 11L9 14L11 11L14 14L16 11L19 14L21 11L23 13" stroke="#2030ff" />
                    <path d="M25 2V7L22 4.500ZM25 10V15L22 12.500Z" fill="#2030ff" />
                  </svg>
                </PanelButton>
                <PanelButton $edge="#ff5050" aria-label="Авто развёртка">
                  <svg width="18" height="18" viewBox="0 0 18 18" fill="none" aria-hidden="true">
                    <text x="9" y="6" fontSize="6" fontWeight="bold" textAnchor="middle" fill="#111" fontFamily={SANS}>AUTO</text>
                    <circle cx="9" cy="12" r="4" fill="#fff" stroke="#333" strokeWidth="1.500" />
                    <path d="M7 10L9 14L11 10M2 9L5 7M16 9L13 7" stroke="#2030ff" />
                  </svg>
                </PanelButton>
                <PanelButton $span={2}>
                  <svg width="8" height="12" viewBox="0 0 8 12" aria-hidden="true"><path d="M0 0L8 6L0 12Z" fill="#00e000" /></svg>
                  Пуск
                </PanelButton>
                <Speed>26.93</Speed>
                <PanelButton $edge="#ff5050" aria-label="Авто запуск">
                  <svg width="18" height="18" viewBox="0 0 18 18" fill="none" aria-hidden="true">
                    <text x="9" y="6" fontSize="6" fontWeight="bold" textAnchor="middle" fill="#111" fontFamily={SANS}>AUTO</text>
                    <path d="M5 16Q8 16 8 11T12 8" stroke="#c03030" />
                    <path d="M1 11H6M3.500 8.500V13.500" stroke="#2030ff" strokeWidth="1.500" />
                    <path d="M12.500 8V15L16.500 11.500Z" fill="#00b000" stroke="#111" />
                  </svg>
                </PanelButton>
              </ControlGrid>
            </Group>

            <Group $w={50}>
              <legend>Таймеры</legend>
              <TimerStack>
                <TimerButton $edge="#ff5050" aria-label="Таймер старта">
                  <svg width="19" height="18" viewBox="0 0 19 18" fill="none" aria-hidden="true">
                    <circle cx="10" cy="9" r="7.500" fill="#fff" stroke="#222" />
                    <path d="M9 9L10 12L14 6" stroke="#666" />
                    <path d="M1 5H6V2.500L10 6.500L6 10.500V8H1Z" fill="#30a0a0" stroke="#104848" />
                  </svg>
                  <Caret />
                </TimerButton>
                <TimerButton $edge="#999" aria-label="Таймер остановки">
                  <svg width="19" height="18" viewBox="0 0 19 18" fill="none" aria-hidden="true">
                    <circle cx="9" cy="9" r="7.500" fill="#fff" stroke="#222" />
                    <path d="M9 4V9L13 6" stroke="#666" />
                    <path d="M9 11.500H13V9L17.500 13L13 17V14.500H9Z" fill="#e040c0" stroke="#601050" />
                  </svg>
                  <Caret />
                </TimerButton>
              </TimerStack>
            </Group>
          </Panels>
        </Deck>

        <Status>
          <StatusCell $w={142}>USB Осциллограф&nbsp; 2.01.2560</StatusCell>
          <StatusCell />
          <StatusCell $w={37}>2.0</StatusCell>
        </Status>
      </Window>
    </Page>
  );
}
